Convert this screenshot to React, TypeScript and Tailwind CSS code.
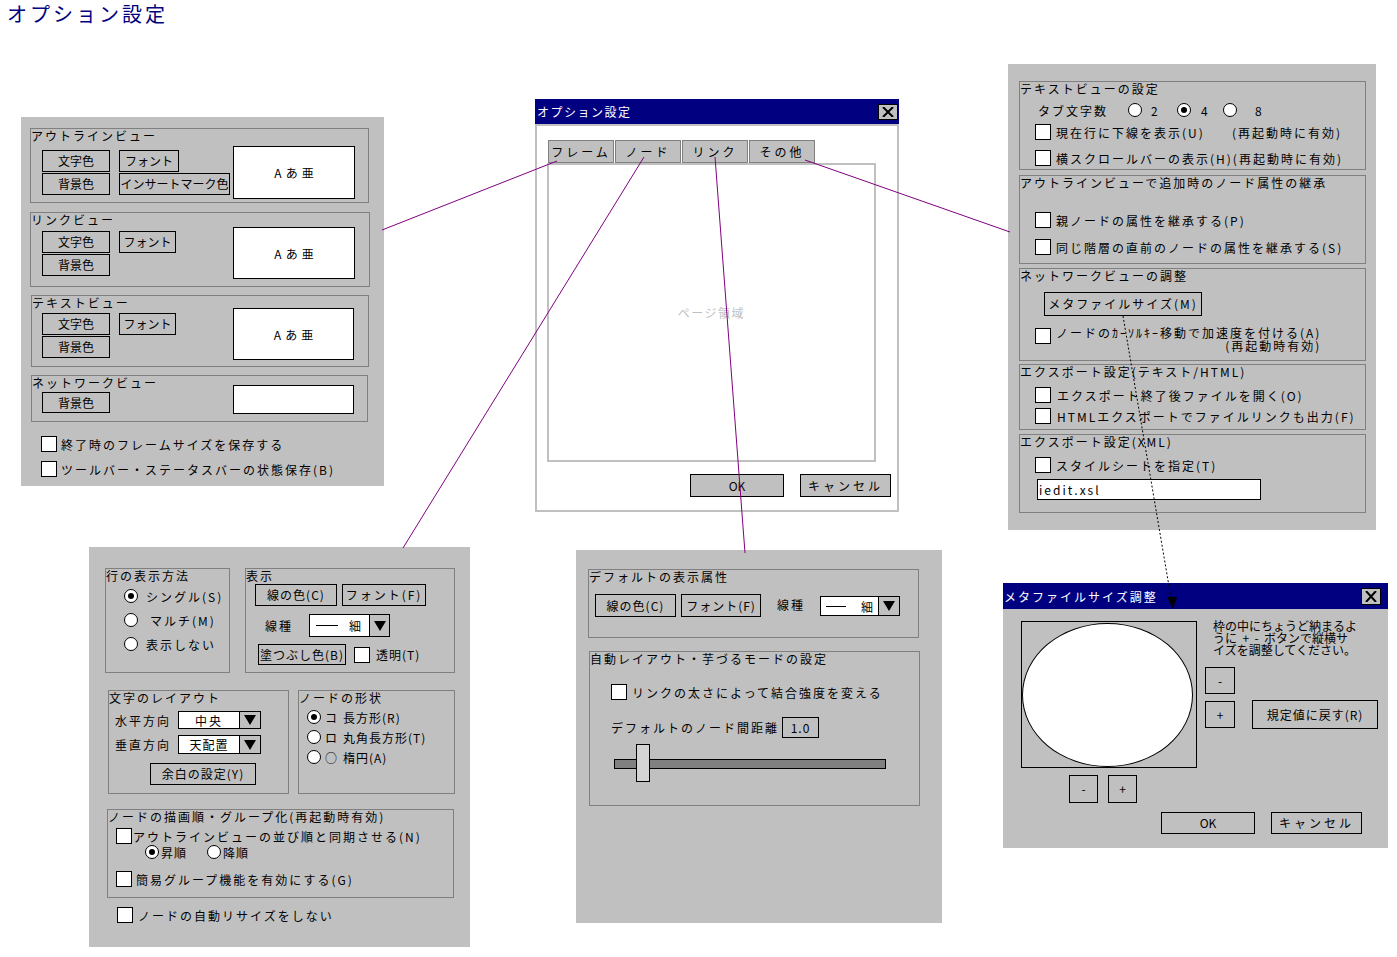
import React from "react";

type P = { cls?: string; children?: React.ReactNode };

const Btn = ({ cls = "", children }: P) => (
  <div className={"flex items-center justify-center border border-black bg-[#c0c0c0] text-[12px] leading-none whitespace-nowrap shrink-0 " + cls}>
    {children}
  </div>
);

const Check = ({ cls = "" }: P) => <div className={"w-[16px] h-[16px] border border-black bg-white shrink-0 " + cls} />;

const Radio = ({ sel = false, cls = "" }: { sel?: boolean; cls?: string }) => (
  <div className={"w-[14px] h-[14px] rounded-full border border-black bg-white flex items-center justify-center shrink-0 " + cls}>
    {sel && <div className="w-[6px] h-[6px] rounded-full bg-black" />}
  </div>
);

const Lbl = ({ cls = "", children }: P) => (
  <div className={"h-[13px] leading-[13px] tracking-[2px] whitespace-nowrap " + cls}>{children}</div>
);

const Preview = ({ cls = "", text = true }: { cls?: string; text?: boolean }) => (
  <div className={"bg-white border border-black flex items-center justify-center gap-[4px] shrink-0 " + cls}>
    {text && (
      <>
        <span>A</span>
        <span>あ</span>
        <span>亜</span>
      </>
    )}
  </div>
);

const Tri = () => (
  <svg width="12" height="10" viewBox="0 0 12 10">
    <path d="M0 0H12L6 10Z" fill="black" />
  </svg>
);

const Close = () => (
  <div className="w-[20px] h-[16px] bg-[#c0c0c0] border border-black flex items-center justify-center">
    <svg width="12" height="10" viewBox="0 0 12 10">
      <path d="M1 0L11 10M11 0L1 10" stroke="black" strokeWidth="2" />
    </svg>
  </div>
);

const Tab = ({ children }: P) => (
  <div className="w-[66px] h-[23px] border border-[#808080] bg-[#c0c0c0] flex items-center justify-center tracking-[3px]">
    {children}
  </div>
);

const CbRow = ({ cls = "", tcls = "", children }: P & { tcls?: string }) => (
  <div className={"flex items-center h-[16px] " + cls}>
    <Check />
    <span className={"whitespace-nowrap tracking-[2px] " + tcls}>{children}</span>
  </div>
);

export default function App() {
  return (
    <div className="relative w-[1397px] h-[957px] bg-white overflow-hidden text-black text-[12px] leading-[13px] font-['Noto_Sans_CJK_JP','Noto_Sans',sans-serif]">
      <div className="pl-[7px] text-[20px] leading-[28px] tracking-[3px] text-[#000080]">オプション設定</div>

      {/* Left panel: フレーム */}
      <div className="absolute left-[21px] top-[117px] w-[363px] h-[369px] bg-[#c0c0c0] pt-[11px] pl-[9px]">
        <div className="border border-[#808080] w-[339px] h-[75px] flex">
          <div className="flex flex-col">
            <Lbl>アウトラインビュー</Lbl>
            <div className="ml-[11px] mt-[8px] grid grid-cols-[68px_auto] gap-x-[9px] gap-y-[1px] justify-items-start">
              <Btn cls="w-[68px] h-[22px]">文字色</Btn>
              <Btn cls="w-[60px] h-[22px]">フォント</Btn>
              <Btn cls="w-[68px] h-[22px]">背景色</Btn>
              <Btn cls="w-[111px] h-[22px]">インサートマーク色</Btn>
            </div>
          </div>
          <Preview cls="ml-auto mt-[17px] mr-[13px] w-[122px] h-[53px]" />
        </div>

        <div className="mt-[9px] border border-[#808080] w-[340px] h-[75px] flex">
          <div className="flex flex-col">
            <Lbl>リンクビュー</Lbl>
            <div className="ml-[11px] mt-[5px] grid grid-cols-[68px_auto] gap-x-[9px] gap-y-[1px] justify-items-start">
              <Btn cls="w-[68px] h-[22px]">文字色</Btn>
              <Btn cls="w-[57px] h-[22px]">フォント</Btn>
              <Btn cls="w-[68px] h-[22px]">背景色</Btn>
            </div>
          </div>
          <Preview cls="ml-auto mt-[14px] mr-[14px] w-[122px] h-[52px]" />
        </div>

        <div className="mt-[8px] ml-[1px] border border-[#808080] w-[338px] h-[72px] flex">
          <div className="flex flex-col">
            <Lbl>テキストビュー</Lbl>
            <div className="ml-[10px] mt-[4px] grid grid-cols-[68px_auto] gap-x-[9px] gap-y-[1px] justify-items-start">
              <Btn cls="w-[68px] h-[22px]">文字色</Btn>
              <Btn cls="w-[57px] h-[22px]">フォント</Btn>
              <Btn cls="w-[68px] h-[22px]">背景色</Btn>
            </div>
          </div>
          <Preview cls="ml-auto mt-[12px] mr-[14px] w-[121px] h-[52px]" />
        </div>

        <div className="mt-[8px] ml-[1px] border border-[#808080] w-[337px] h-[47px] flex">
          <div className="flex flex-col">
            <Lbl>ネットワークビュー</Lbl>
            <Btn cls="ml-[10px] mt-[3px] w-[68px] h-[21px]">背景色</Btn>
          </div>
          <Preview cls="ml-auto mt-[9px] mr-[13px] w-[121px] h-[29px]" text={false} />
        </div>

        <CbRow cls="ml-[11px] mt-[14px]" tcls="ml-[4px]">終了時のフレームサイズを保存する</CbRow>
        <CbRow cls="ml-[11px] mt-[9px]" tcls="ml-[4px]">ツールバー・ステータスバーの状態保存(B)</CbRow>
      </div>

      {/* Center dialog */}
      <div className="absolute left-[535px] top-[99px] w-[364px]">
        <div className="h-[25px] bg-[#000080] flex items-center justify-between pl-[2px] pr-[1px]">
          <span className="text-white tracking-[1.5px]">オプション設定</span>
          <Close />
        </div>
        <div className="h-[388px] border-2 border-[#c0c0c0] bg-white flex flex-col">
          <div className="ml-[11px] mt-[14px] flex gap-[1px]">
            <Tab>フレーム</Tab>
            <Tab>ノード</Tab>
            <Tab>リンク</Tab>
            <Tab>その他</Tab>
          </div>
          <div className="ml-[10px] w-[329px] h-[299px] border-2 border-[#c0c0c0] flex items-center justify-center text-[#c0c0c0] tracking-[1.5px]">
            ページ領域
          </div>
          <div className="mt-[12px] flex justify-end gap-[16px] pr-[6px]">
            <Btn cls="w-[94px] h-[23px]">OK</Btn>
            <Btn cls="w-[91px] h-[23px] tracking-[3px]">キャンセル</Btn>
          </div>
        </div>
      </div>

      {/* Right panel: その他 */}
      <div className="absolute left-[1008px] top-[64px] w-[368px] h-[466px] bg-[#c0c0c0] pt-[17px] pl-[11px]">
        <div className="border border-[#808080] w-[347px] h-[89px]">
          <Lbl>テキストビューの設定</Lbl>
          <div className="flex items-center mt-[7px] ml-[18px] h-[16px]">
            <span className="w-[90px] tracking-[2px]">タブ文字数</span>
            <Radio />
            <span className="ml-[9px] w-[26px]">2</span>
            <Radio sel />
            <span className="ml-[10px] w-[22px]">4</span>
            <Radio />
            <span className="ml-[18px]">8</span>
          </div>
          <div className="flex items-center mt-[6px] ml-[15px] h-[16px]">
            <Check />
            <span className="ml-[5px] w-[176px] tracking-[2px] whitespace-nowrap">現在行に下線を表示(U)</span>
            <span className="tracking-[2px] whitespace-nowrap">(再起動時に有効)</span>
          </div>
          <CbRow cls="mt-[10px] ml-[15px]" tcls="ml-[5px]">横スクロールバーの表示(H)(再起動時に有効)</CbRow>
        </div>

        <div className="mt-[5px] border border-[#808080] w-[347px] h-[89px]">
          <Lbl>アウトラインビューで追加時のノード属性の継承</Lbl>
          <CbRow cls="mt-[23px] ml-[15px]" tcls="ml-[5px]">親ノードの属性を継承する(P)</CbRow>
          <CbRow cls="mt-[11px] ml-[15px]" tcls="ml-[5px]">同じ階層の直前のノードの属性を継承する(S)</CbRow>
        </div>

        <div className="mt-[4px] border border-[#808080] w-[347px] h-[93px]">
          <Lbl>ネットワークビューの調整</Lbl>
          <Btn cls="mt-[10px] ml-[24px] w-[158px] h-[24px] tracking-[2px]">メタファイルサイズ(M)</Btn>
          <div className="flex items-start mt-[12px] ml-[15px]">
            <Check />
            <div className="ml-[5px] -mt-[2px] inline-flex flex-col items-end tracking-[2px] whitespace-nowrap leading-[13px]">
              <span className="h-[13px]">ノードのｶｰｿﾙｷｰ移動で加速度を付ける(A)</span>
              <span className="h-[13px]">(再起動時有効)</span>
            </div>
          </div>
        </div>

        <div className="mt-[3px] border border-[#808080] w-[347px] h-[66px]">
          <Lbl>エクスポート設定(テキスト/HTML)</Lbl>
          <CbRow cls="mt-[9px] ml-[15px]" tcls="ml-[6px]">エクスポート終了後ファイルを開く(O)</CbRow>
          <CbRow cls="mt-[5px] ml-[15px]" tcls="ml-[6px]">HTMLエクスポートでファイルリンクも出力(F)</CbRow>
        </div>

        <div className="mt-[4px] border border-[#808080] w-[347px] h-[79px]">
          <Lbl>エクスポート設定(XML)</Lbl>
          <CbRow cls="mt-[9px] ml-[15px]" tcls="ml-[5px]">スタイルシートを指定(T)</CbRow>
          <div className="mt-[6px] ml-[17px] w-[224px] h-[21px] bg-white border border-black flex items-center pl-[1px] tracking-[2px]">
            iedit.xsl
          </div>
        </div>
      </div>

      {/* Bottom-left panel: ノード */}
      <div className="absolute left-[89px] top-[547px] w-[381px] h-[400px] bg-[#c0c0c0] pt-[21px] pl-[16px]">
        <div className="flex">
          <div className="border border-[#808080] w-[125px] h-[105px]">
            <Lbl>行の表示方法</Lbl>
            <div className="ml-[18px] mt-[6px] flex flex-col gap-[8px]">
              <div className="flex items-center h-[16px]">
                <Radio sel />
                <span className="ml-[8px] tracking-[2px]">シングル(S)</span>
              </div>
              <div className="flex items-center h-[16px]">
                <Radio />
                <span className="ml-[12px] tracking-[2px]">マルチ(M)</span>
              </div>
              <div className="flex items-center h-[16px]">
                <Radio />
                <span className="ml-[8px] tracking-[2px]">表示しない</span>
              </div>
            </div>
          </div>

          <div className="ml-[15px] border border-[#808080] w-[210px] h-[105px]">
            <Lbl>表示</Lbl>
            <div className="flex mt-[2px] ml-[9px] gap-[5px]">
              <Btn cls="w-[82px] h-[22px] tracking-[1px]">線の色(C)</Btn>
              <Btn cls="w-[84px] h-[22px] tracking-[2px]">フォント(F)</Btn>
            </div>
            <div className="flex items-center mt-[8px] ml-[19px]">
              <span className="w-[44px] tracking-[2px]">線種</span>
              <div className="flex w-[81px] h-[23px] border border-black">
                <div className="w-[59px] bg-white flex items-center pl-[6px]">
                  <div className="w-[22px] h-[1px] bg-black" />
                  <span className="ml-[11px]">細</span>
                </div>
                <div className="flex-1 border-l border-black flex items-center justify-center">
                  <Tri />
                </div>
              </div>
            </div>
            <div className="flex items-center mt-[7px] ml-[12px]">
              <Btn cls="w-[88px] h-[21px] tracking-[1px]">塗つぶし色(B)</Btn>
              <Check cls="ml-[8px]" />
              <span className="ml-[6px] tracking-[1px]">透明(T)</span>
            </div>
          </div>
        </div>

        <div className="flex mt-[17px] ml-[3px]">
          <div className="border border-[#808080] w-[181px] h-[104px]">
            <Lbl>文字のレイアウト</Lbl>
            <div className="flex items-center mt-[7px] ml-[6px]">
              <span className="w-[63px] tracking-[2px]">水平方向</span>
              <div className="flex w-[83px] h-[18px] border border-black">
                <div className="w-[60px] bg-white flex items-center justify-center tracking-[2px]">中央</div>
                <div className="flex-1 border-l border-black flex items-center justify-center">
                  <Tri />
                </div>
              </div>
            </div>
            <div className="flex items-center mt-[6px] ml-[6px]">
              <span className="w-[63px] tracking-[2px]">垂直方向</span>
              <div className="flex w-[83px] h-[19px] border border-black">
                <div className="w-[60px] bg-white flex items-center justify-center tracking-[1px]">天配置</div>
                <div className="flex-1 border-l border-black flex items-center justify-center">
                  <Tri />
                </div>
              </div>
            </div>
            <Btn cls="mt-[9px] ml-[41px] w-[106px] h-[22px] tracking-[1px]">余白の設定(Y)</Btn>
          </div>

          <div className="ml-[9px] border border-[#808080] w-[157px] h-[104px]">
            <Lbl>ノードの形状</Lbl>
            <div className="ml-[8px] mt-[5px] flex flex-col gap-[4px]">
              <div className="flex items-center h-[16px]">
                <Radio sel />
                <span className="ml-[4px] w-[18px]">コ</span>
                <span className="tracking-[1px]">長方形(R)</span>
              </div>
              <div className="flex items-center h-[16px]">
                <Radio />
                <span className="ml-[4px] w-[18px]">ロ</span>
                <span className="tracking-[1px]">丸角長方形(T)</span>
              </div>
              <div className="flex items-center h-[16px]">
                <Radio />
                <span className="ml-[4px] w-[18px]">○</span>
                <span className="tracking-[1px]">楕円(A)</span>
              </div>
            </div>
          </div>
        </div>

        <div className="mt-[15px] ml-[2px] border border-[#808080] w-[347px] h-[89px]">
          <Lbl>ノードの描画順・グループ化(再起動時有効)</Lbl>
          <CbRow cls="mt-[5px] ml-[8px]" tcls="ml-[1px]">アウトラインビューの並び順と同期させる(N)</CbRow>
          <div className="flex items-center mt-[1px] ml-[37px] h-[14px]">
            <Radio sel cls="w-[12px] h-[12px]" />
            <span className="ml-[2px] w-[46px] tracking-[1px]">昇順</span>
            <Radio cls="w-[12px] h-[12px]" />
            <span className="ml-[2px] tracking-[1px]">降順</span>
          </div>
          <CbRow cls="mt-[12px] ml-[8px]" tcls="ml-[4px]">簡易グループ機能を有効にする(G)</CbRow>
        </div>

        <CbRow cls="mt-[9px] ml-[12px]" tcls="ml-[5px]">ノードの自動リサイズをしない</CbRow>
      </div>

      {/* Bottom-center panel: リンク */}
      <div className="absolute left-[576px] top-[550px] w-[366px] h-[373px] bg-[#c0c0c0] pt-[19px] pl-[12px]">
        <div className="border border-[#808080] w-[331px] h-[69px]">
          <Lbl>デフォルトの表示属性</Lbl>
          <div className="flex items-start mt-[11px] ml-[6px]">
            <Btn cls="w-[81px] h-[23px] tracking-[1px]">線の色(C)</Btn>
            <Btn cls="ml-[5px] w-[80px] h-[23px] tracking-[1px]">フォント(F)</Btn>
            <span className="ml-[16px] w-[43px] mt-[4px] tracking-[2px]">線種</span>
            <div className="mt-[2px] flex w-[80px] h-[20px] border border-black">
              <div className="w-[57px] bg-white flex items-center pl-[5px]">
                <div className="w-[20px] h-[1px] bg-black" />
                <span className="ml-[15px]">細</span>
              </div>
              <div className="flex-1 border-l border-black flex items-center justify-center">
                <Tri />
              </div>
            </div>
          </div>
        </div>

        <div className="mt-[13px] ml-[1px] border border-[#808080] w-[331px] h-[155px]">
          <Lbl>自動レイアウト・芋づるモードの設定</Lbl>
          <CbRow cls="mt-[19px] ml-[21px]" tcls="ml-[5px]">リンクの太さによって結合強度を変える</CbRow>
          <div className="flex items-center mt-[17px] ml-[21px]">
            <span className="tracking-[2px] whitespace-nowrap">デフォルトのノード間距離</span>
            <div className="ml-[3px] w-[37px] h-[21px] border border-black flex items-center justify-center tracking-[1px]">1.0</div>
          </div>
          <div className="relative mt-[6px] ml-[24px] w-[272px] h-[38px] pt-[15px]">
            <div className="w-[272px] h-[10px] bg-[#808080] border border-black" />
            <div className="absolute left-[22px] top-0 w-[14px] h-[38px] bg-[#d4d4d4] border border-black" />
          </div>
        </div>
      </div>

      {/* Metafile dialog */}
      <div className="absolute left-[1003px] top-[583px] w-[385px]">
        <div className="h-[26px] bg-[#000080] flex items-center justify-between pl-[1px] pr-[7px]">
          <span className="text-white tracking-[2px]">メタファイルサイズ調整</span>
          <div className="w-[20px] h-[17px] bg-[#c0c0c0] border border-black flex items-center justify-center">
            <svg width="12" height="11" viewBox="0 0 12 11">
              <path d="M1 0L11 11M11 0L1 11" stroke="black" strokeWidth="2" />
            </svg>
          </div>
        </div>
        <div className="h-[239px] bg-[#c0c0c0] flex flex-col">
          <div className="flex">
            <div className="ml-[18px] mt-[12px] flex flex-col">
              <div className="w-[176px] h-[147px] border border-black flex items-center">
                <div className="w-[171px] h-[144px] rounded-[50%] bg-white border border-black" />
              </div>
              <div className="flex mt-[7px] ml-[48px] gap-[10px]">
                <Btn cls="w-[29px] h-[28px]">-</Btn>
                <Btn cls="w-[29px] h-[28px]">+</Btn>
              </div>
            </div>
            <div className="ml-[8px] mt-[11px] flex flex-col">
              <div className="ml-[8px] flex flex-col text-[12px] leading-[12px] whitespace-pre">
                <span className="h-[12px]">枠の中にちょうど納まるよ</span>
                <span className="h-[12px]">うに  +  -  ボタンで縦横サ</span>
                <span className="h-[12px]">イズを調整してください。</span>
              </div>
              <Btn cls="mt-[11px] w-[30px] h-[27px]">-</Btn>
              <div className="flex items-start mt-[6px]">
                <Btn cls="mt-[1px] w-[30px] h-[27px]">+</Btn>
                <Btn cls="ml-[17px] w-[126px] h-[29px] tracking-[1px]">規定値に戻す(R)</Btn>
              </div>
            </div>
          </div>
          <div className="mt-[9px] flex justify-end gap-[16px] pr-[26px]">
            <Btn cls="w-[94px] h-[22px]">OK</Btn>
            <Btn cls="w-[91px] h-[22px] tracking-[3px]">キャンセル</Btn>
          </div>
        </div>
      </div>

      {/* connector lines */}
      <svg className="absolute left-0 top-0 pointer-events-none" width="1397" height="957" viewBox="0 0 1397 957">
        <g stroke="#800080" strokeWidth="1" fill="none">
          <line x1="557" y1="161" x2="382" y2="230" />
          <line x1="644" y1="157" x2="403" y2="548" />
          <line x1="715" y1="157" x2="745" y2="553" />
          <line x1="805" y1="160" x2="1010" y2="232" />
        </g>
        <line x1="1123" y1="316" x2="1171" y2="598" stroke="black" strokeWidth="1" strokeDasharray="2 2" />
        <polygon points="1167,597 1177,597 1173,609" fill="black" />
      </svg>
    </div>
  );
}
